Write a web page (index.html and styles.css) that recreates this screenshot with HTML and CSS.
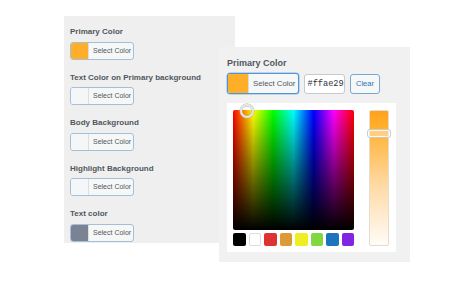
FILE: index.html
```html
<!DOCTYPE html>
<html>
<head>
<meta charset="utf-8">
<link rel="stylesheet" href="styles.css">
</head>
<body>
<div class="stage">
  <div class="panel-left">
    <div class="field">
      <div class="label">Primary Color</div>
      <div class="cbtn"><span class="sw" style="background:#ffae29"></span><span class="txt">Select Color</span></div>
    </div>
    <div class="field">
      <div class="label">Text Color on Primary background</div>
      <div class="cbtn"><span class="sw"></span><span class="txt">Select Color</span></div>
    </div>
    <div class="field">
      <div class="label">Body Background</div>
      <div class="cbtn"><span class="sw"></span><span class="txt">Select Color</span></div>
    </div>
    <div class="field">
      <div class="label">Highlight Background</div>
      <div class="cbtn"><span class="sw"></span><span class="txt">Select Color</span></div>
    </div>
    <div class="field">
      <div class="label">Text color</div>
      <div class="cbtn"><span class="sw" style="background:#7b8294"></span><span class="txt">Select Color</span></div>
    </div>
  </div>

  <div class="panel-right">
    <div class="rlabel">Primary Color</div>
    <div class="controls">
      <div class="rbtn"><span class="rsw"></span><span class="rtxt">Select Color</span></div>
      <div class="hex">#ffae29</div>
      <div class="clear">Clear</div>
    </div>
    <div class="picker">
      <div class="main">
        <div class="square">
          <span class="ring"></span>
        </div>
        <div class="palette">
          <span class="p" style="background:#000000"></span>
          <span class="p p-white"></span>
          <span class="p" style="background:#dd3333"></span>
          <span class="p" style="background:#dd9933"></span>
          <span class="p" style="background:#eeee22"></span>
          <span class="p" style="background:#81d742"></span>
          <span class="p" style="background:#1e73be"></span>
          <span class="p" style="background:#8224e3"></span>
        </div>
      </div>
      <div class="strip">
        <span class="handle"></span>
      </div>
    </div>
  </div>
</div>
</body>
</html>
```
FILE: styles.css
```css
* { box-sizing: border-box; }
html, body { margin: 0; padding: 0; background: #ffffff; }
body { font-family: "Liberation Sans", Arial, sans-serif; }

.stage { position: relative; width: 460px; height: 288px; }

.panel-left {
  position: absolute;
  left: 64px; top: 16px;
  width: 171px; height: 227px;
  background: #efefef;
  padding: 11px 6px 0 6px;
  display: flex;
  flex-direction: column;
  gap: 13px;
}
.field { display: flex; flex-direction: column; gap: 4.5px; }
.label {
  font-size: 8px;
  line-height: 10px;
  font-weight: bold;
  color: #50575e;
  white-space: nowrap;
}
.cbtn {
  width: 64px; height: 18px;
  display: flex;
  border: 1px solid #a5bfd6;
  border-radius: 3px;
  background: #f6f7f7;
  overflow: hidden;
}
.sw { width: 18px; height: 100%; background: #f4f6f7; border-right: 1px solid #dcdfe2; }
.txt {
  flex: 1;
  font-size: 7px;
  line-height: 16px;
  color: #50575e;
  padding-left: 4px;
  white-space: nowrap;
}

.panel-right {
  position: absolute;
  left: 219px; top: 47px;
  width: 191px; height: 215px;
  background: #f1f1f1;
  padding: 11px 14px 0 8px;
  display: flex;
  flex-direction: column;
}
.rlabel {
  font-size: 9px;
  line-height: 11px;
  font-weight: bold;
  color: #50575e;
  white-space: nowrap;
}
.controls { display: flex; gap: 5px; margin-top: 4px; align-items: center; }
.rbtn {
  width: 72px; height: 21px;
  display: flex;
  border: 1px solid #4f94d4;
  border-radius: 3px;
  background: #f6f7f7;
  overflow: hidden;
  box-shadow: 0 0 0 0.5px #8ab8e3;
}
.rsw { width: 21px; height: 100%; background: #ffae29; border-right: 1px solid #d9dcdf; }
.rtxt {
  flex: 1;
  font-size: 7.8px;
  line-height: 19px;
  color: #50575e;
  padding-left: 4px;
  white-space: nowrap;
}
.hex {
  width: 41px; height: 20px;
  background: #ffffff;
  border: 1px solid #c7cacd;
  border-radius: 3px;
  font-family: "Liberation Mono", "DejaVu Sans Mono", monospace;
  font-size: 8.6px;
  line-height: 18px;
  color: #2c3338;
  padding-left: 2.5px;
  white-space: nowrap;
}
.clear {
  width: 30px; height: 20px;
  border: 1px solid #7aa7d1;
  border-radius: 3px;
  background: #f6f7f7;
  color: #2a73b5;
  font-size: 7.5px;
  line-height: 18px;
  text-align: center;
}

.picker {
  margin-top: 9px;
  width: 169px; height: 149px;
  background: #ffffff;
  padding: 6.5px 7px 6px 6px;
  display: flex;
  gap: 15px;
}
.main { display: flex; flex-direction: column; gap: 3px; }
.square {
  position: relative;
  width: 121px; height: 121px;
  border-radius: 2px;
  background:
    linear-gradient(to bottom, rgba(0,0,0,0) 0%, #000000 100%),
    linear-gradient(to right, #ff0000 0%, #ffff00 16.67%, #00ff00 33.33%, #00ffff 50%, #0000ff 66.67%, #ff00ff 83.33%, #ff0000 100%);
}
.ring {
  position: absolute;
  left: 6.5px; top: -6px;
  width: 14px; height: 14px;
  border-radius: 50%;
  border: 2px solid #e4e4e4;
  box-shadow: 0 0 0 0.5px #aaaaaa, inset 0 0 0 0.5px #aaaaaa;
}
.palette { display: flex; justify-content: space-between; width: 121px; }
.p { width: 12.5px; height: 13px; border-radius: 2px; }
.p-white { background: #ffffff; border: 1px solid #dddddd; }

.strip {
  position: relative;
  width: 19.5px; height: 136.5px;
  border-radius: 2px;
  border: 1px solid #e6dccd;
  background: linear-gradient(to bottom, #ffa11d 0%, #ffae29 10%, #ffd9a3 55%, #fffcf8 100%);
}
.handle {
  position: absolute;
  left: -3px; right: -3px;
  top: 18px;
  height: 9px;
  border-radius: 3px;
  border: 1px solid #c9c9c9;
  background: rgba(255,255,255,0.35);
  box-shadow: inset 0 0 0 1px rgba(255,255,255,0.8);
}
```
